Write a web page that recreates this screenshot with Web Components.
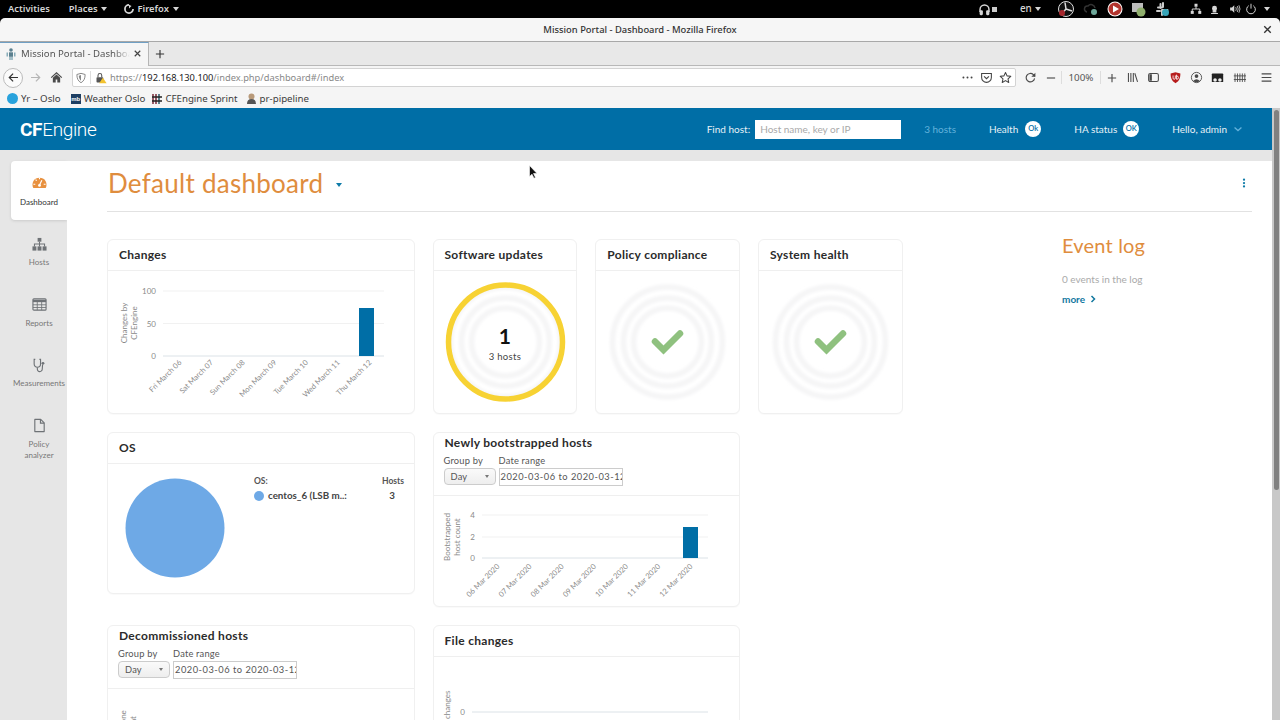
<!DOCTYPE html>
<html lang="en">
<head>
<meta charset="utf-8">
<title>Mission Portal - Dashboard - Mozilla Firefox</title>
<style>
  html, body { margin: 0; height: 720px; overflow: hidden; background: #fff; }
  body { display: flex; flex-direction: column; font-family: "Lato", "Liberation Sans", sans-serif; }
</style>
</head>
<body>
<gnome-bar></gnome-bar>
<ff-chrome></ff-chrome>
<app-header></app-header>
<app-shell>
  <side-nav></side-nav>
  <dash-page></dash-page>
</app-shell>
<page-scrollbar></page-scrollbar>
<mouse-cursor></mouse-cursor>

<script>
"use strict";

/* ---- icon set: 16x16 boxes, stroke or fill per icon ---- */
const ICONS = {
  back: '<path d="M13.5 8H3M7.5 3.2 2.8 8l4.7 4.8" fill="none" stroke="currentColor" stroke-width="1.5"/>',
  forward: '<path d="M2.5 8H13M8.5 3.2 13.2 8l-4.7 4.8" fill="none" stroke="currentColor" stroke-width="1.5"/>',
  home: '<path d="M1.5 8.2 8 2.2l6.500 6" fill="none" stroke="currentColor" stroke-width="1.5"/><path d="M3.500 8.200V14H7v-3.500h2V14h3.500V8.200L8 4.200z" fill="currentColor"/>',
  shield: '<path d="M8 1.800 13.500 3.300C13.500 8.500 12 12 8 14.300 4 12 2.500 8.500 2.500 3.300z" fill="none" stroke="currentColor" stroke-width="1.300"/><path d="M8 4v7.500C6 10 5.200 8 5 5z" fill="currentColor"/>',
  lock: '<rect x="2" y="7" width="9" height="7" rx="1" fill="#555"/><path d="M4 7V4.500a2.500 2.500 0 0 1 5 0V7" fill="none" stroke="#555" stroke-width="1.400"/><path d="M10.500 7.500 15.500 15h-10z" fill="#f2c230"/>',
  dots: '<circle cx="3" cy="8" r="1.200" fill="currentColor"/><circle cx="8" cy="8" r="1.200" fill="currentColor"/><circle cx="13" cy="8" r="1.200" fill="currentColor"/>',
  pocket: '<path d="M2 3h12v5a6 6 0 0 1-12 0z" fill="none" stroke="currentColor" stroke-width="1.300"/><path d="M5 6.500 8 9.500l3-3" fill="none" stroke="currentColor" stroke-width="1.300"/>',
  star: '<path d="M8 1.800 9.900 6l4.600.500-3.400 3.100.9 4.500L8 11.800l-4 2.300.9-4.500L1.500 6.500 6.100 6z" fill="none" stroke="currentColor" stroke-width="1.300" stroke-linejoin="round"/>',
  reload: '<path d="M13 9a5.200 5.200 0 1 1-1.500-4.500L13.500 6.500" fill="none" stroke="currentColor" stroke-width="1.400"/><path d="M14 2v5H9z" fill="currentColor"/>',
  minus: '<path d="M2.500 8h11" stroke="currentColor" stroke-width="1.500"/>',
  plus: '<path d="M2.500 8h11M8 2.500v11" stroke="currentColor" stroke-width="1.500"/>',
  library: '<path d="M3 2.500v11M6 2.500v11M9 2.500v11M10.800 2.800l3.400 10.600" fill="none" stroke="currentColor" stroke-width="1.300"/>',
  sidebar: '<rect x="2" y="3" width="12" height="10" rx="2" fill="none" stroke="currentColor" stroke-width="1.300"/><path d="M3 4h3v8H3z" fill="currentColor"/>',
  ublock: '<path d="M8 1.500 14 3.200C14 9 12.500 12.500 8 15 3.500 12.500 2 9 2 3.200z" fill="#b71c1c"/><path d="M5 5.500v3.200q0 1.500 1.400 1.500T7.800 8.700V5.500M9.200 4.500v5.700h.6q1.800 0 1.800-2t-1.800-2h-.6" fill="none" stroke="#fff" stroke-width="1"/>',
  account: '<circle cx="8" cy="8" r="6.300" fill="none" stroke="currentColor" stroke-width="1.100"/><circle cx="8" cy="6.300" r="2.300" fill="currentColor"/><path d="M3.800 12.200Q8 7.800 12.200 12.200 8 15.500 3.800 12.200z" fill="currentColor"/>',
  tabs: '<path d="M2 3h12q1 0 1 1v9.500H1V4q0-1 1-1z" fill="#222"/><circle cx="5" cy="11" r="2.200" fill="#eee"/><circle cx="11" cy="11" r="2.200" fill="#eee"/>',
  fence: '<path d="M2.500 3v10.500M5.500 3v10.500M8.500 3v10.500M11.500 3v10.500M14.500 3v10.500M1 6h15M1 10.500h15" fill="none" stroke="currentColor" stroke-width="1.100"/>',
  menu: '<path d="M2 3.500h12M2 8h12M2 12.500h12" stroke="currentColor" stroke-width="1.500"/>',
  close: '<path d="M4 4l8 8M12 4l-8 8" stroke="currentColor" stroke-width="1.700"/>',
  foot: '<path d="M8 1.500a6.500 6.500 0 1 0 6.500 6.500" fill="none" stroke="currentColor" stroke-width="2.800"/><path d="M8 1v6l4-4z" fill="currentColor"/>',
  headset: '<path d="M2.500 11V8a5.500 5.500 0 0 1 11 0v3" fill="none" stroke="currentColor" stroke-width="1.800"/><rect x="2" y="9" width="4" height="6" rx="1.400" fill="currentColor"/><rect x="10" y="9" width="4" height="6" rx="1.400" fill="currentColor"/>',
  network: '<rect x="6" y="1" width="4" height="4" fill="currentColor"/><rect x="1" y="10.500" width="4" height="4" fill="currentColor"/><rect x="11" y="10.500" width="4" height="4" fill="currentColor"/><path d="M8 5v3M3 10.500V8h10v2.500" fill="none" stroke="currentColor" stroke-width="1.300"/>',
  keeper: '<circle cx="8" cy="6" r="3.600" fill="currentColor"/><path d="M6 8h4v3.500H6zM3 13.800h10" stroke="currentColor" stroke-width="1.500" fill="currentColor"/>',
  speaker: '<path d="M1.500 6v4h2.500l3 3V3L4 6z" fill="currentColor"/><path d="M9 5.500q1.500 2.500 0 5M11 4q2.500 4 0 8M13.200 3q3 5 0 10" fill="none" stroke="currentColor" stroke-width="1.100"/>',
  power: '<path d="M5 3.600a5.800 5.800 0 1 0 6 0" fill="none" stroke="currentColor" stroke-width="1.300"/><path d="M8 1v6.500" stroke="currentColor" stroke-width="1.300"/>',
  gauge: '<path d="M1.400 12.800a7.500 7.500 0 1 1 13.200 0z" fill="currentColor"/><g stroke="#fff" stroke-width="1.200"><path d="M8 9.500 10.500 4.500"/><path d="M1.500 8.800h2M3.800 3.800l1.200 1.200M8 1.500v2M12.500 8.800h2"/></g><circle cx="8" cy="10" r="1.500" fill="#fff"/>',
  hosts: '<rect x="6" y="1" width="4" height="4" fill="currentColor"/><rect x=".5" y="10" width="4.200" height="4.500" fill="currentColor"/><rect x="5.900" y="10" width="4.200" height="4.500" fill="currentColor"/><rect x="11.300" y="10" width="4.200" height="4.500" fill="currentColor"/><path d="M8 5v5M2.600 10V7.500h10.800V10" fill="none" stroke="currentColor" stroke-width="1.100"/>',
  table: '<rect x="1" y="2" width="14" height="12" rx="1" fill="none" stroke="currentColor" stroke-width="1.200"/><path d="M1 3h14v2.500H1z" fill="currentColor"/><path d="M1 8.300h14M1 11.200h14M5.600 5v9M10.300 5v9" stroke="currentColor" stroke-width=".9"/>',
  stetho: '<path d="M3.500 1.500H2.300v5a3.400 3.400 0 0 0 6.800 0v-5H7.900" fill="none" stroke="currentColor" stroke-width="1.200"/><path d="M5.700 10v1.800a2.600 2.600 0 0 0 5.200.2l.4-5" fill="none" stroke="currentColor" stroke-width="1.200"/><circle cx="11.700" cy="5.700" r="1.500" fill="currentColor"/>',
  doc: '<path d="M3 1.500h6.300L13 5.200v9.300H3z" fill="none" stroke="currentColor" stroke-width="1.200" stroke-linejoin="round"/><path d="M9 1.500v4h4" fill="none" stroke="currentColor" stroke-width="1.200"/>',
  kebab: '<circle cx="8" cy="3.500" r="1.500" fill="currentColor"/><circle cx="8" cy="8" r="1.500" fill="currentColor"/><circle cx="8" cy="12.500" r="1.500" fill="currentColor"/>',
  chevron: '<path d="M2.500 5.500 8 10.500l5.500-5" fill="none" stroke="currentColor" stroke-width="2"/>'
};

class AppIcon extends HTMLElement {
  connectedCallback() {
    const root = this.attachShadow({ mode: "open" });
    const size = this.getAttribute("size") || 14;
    root.innerHTML = `<style>:host{display:inline-flex;align-items:center;justify-content:center}svg{display:block}</style>
      <svg width="${size}" height="${size}" viewBox="0 0 16 16">${ICONS[this.getAttribute("name")] || ""}</svg>`;
  }
}
customElements.define("app-icon", AppIcon);

/* ---- GNOME top bar ---- */
class GnomeBar extends HTMLElement {
  constructor() {
    super();
    this.attachShadow({ mode: "open" }).innerHTML = `
    <style>
      :host{display:flex;align-items:center;height:18px;background:#000;color:#d6d6d6;
        font:600 9.400px/18px "Noto Sans","Open Sans",sans-serif;flex:none;padding-left:8px}
      .caret{display:inline-block;border:3.500px solid transparent;border-top:4px solid #d6d6d6;border-bottom:0;margin-left:3px;vertical-align:1px}
      .m{white-space:nowrap}
      .right{margin-left:auto;display:flex;align-items:center;height:18px}
      .right > *{flex:none}
      .en{font-weight:500;margin:0 0 0 23px;width:27px;white-space:nowrap;font-size:9.800px}
      .square{width:5px;height:5px;background:#ccc;margin-left:1px}
    </style>
    <span class="m" style="margin-right:19px">Activities</span>
    <span class="m" style="margin-right:17px">Places<i class="caret"></i></span>
    <span class="m" style="display:flex;align-items:center;gap:4px"><app-icon name="foot" size="10"></app-icon>Firefox<i class="caret" style="margin-left:0"></i></span>
    <div class="right">
      <app-icon name="headset" size="13"></app-icon><i class="square"></i>
      <span class="en">en<i class="caret"></i></span>
      <svg width="18" height="18" viewBox="0 0 18 18" style="margin-left:10px"><circle cx="9" cy="9" r="7.500" fill="#111" stroke="#ddd" stroke-width="1"/><path d="M9 9 8 2.500M9 9l6 2M9 9l-4 4.500" stroke="#ddd" stroke-width="1.500"/><circle cx="5" cy="13" r="3" fill="#a5262c"/></svg>
      <svg width="16" height="14" viewBox="0 0 16 14" style="margin-left:8px"><path d="M4 10a3 3 0 0 1 1-6 4 4 0 0 1 7 2" fill="none" stroke="#333" stroke-width="1.500"/><circle cx="11" cy="10" r="3" fill="#6ea89a"/></svg>
      <svg width="16" height="16" viewBox="0 0 16 16" style="margin-left:8px"><circle cx="8" cy="8" r="7.500" fill="#fff"/><circle cx="8" cy="8" r="6.500" fill="#b3352f"/><path d="M6 4.500 12 8l-6 3.500z" fill="#fff"/></svg>
      <svg width="16" height="15" viewBox="0 0 16 15" style="margin-left:8px"><rect x="1" y="1" width="11" height="9" fill="#bbb"/><circle cx="10" cy="10" r="4.500" fill="#8fae6c"/></svg>
      <svg width="15" height="15" viewBox="0 0 15 15" style="margin-left:8px"><path d="M3 5.500h4M5.500 2v4M8 1v4M7.500 8h5M7 8v5" stroke="#ccc" stroke-width="2" stroke-linecap="round"/><path d="M2 9h3" stroke="#ccc" stroke-width="2" stroke-linecap="round"/><circle cx="10.500" cy="10.500" r="3.500" fill="#36a4b8"/></svg>
      <app-icon name="network" size="12" style="margin-left:20px"></app-icon>
      <app-icon name="keeper" size="11" style="margin-left:7px"></app-icon>
      <app-icon name="speaker" size="12" style="margin-left:9px"></app-icon>
      <app-icon name="power" size="12" style="margin-left:4px"></app-icon>
      <i class="caret" style="margin:0 10px 0 7px;vertical-align:0"></i>
    </div>`;
  }
}
customElements.define("gnome-bar", GnomeBar);

/* ---- Firefox chrome: title, tab strip, nav bar, bookmarks ---- */
class FfChrome extends HTMLElement {
  constructor() {
    super();
    this.attachShadow({ mode: "open" }).innerHTML = `
    <style>
      :host{display:block;flex:none;background:#000;color:#3c3c3c;font:9.600px "Noto Sans","Open Sans",sans-serif}
      .title{height:24px;background:#f6f6f6;border-radius:5px 5px 0 0;border-bottom:1px solid #a8a8a8;box-sizing:border-box;
        display:flex;align-items:center;justify-content:center;position:relative;font-weight:500;color:#333;font-size:9.400px}
      .title app-icon{position:absolute;right:6px;top:5px;color:#333}
      .tabs{height:24px;background:#e8e8e8;border-bottom:1px solid #b8b8b8;display:flex;box-sizing:border-box}
      .tab{width:149px;background:#f5f5f5;border-top:1px solid #6f9fc4;border-right:1px solid #b5b5b5;margin-bottom:-1px;box-sizing:border-box;
        display:flex;align-items:center;padding:0 0 2px 6px;gap:5px;white-space:nowrap;color:#555}
      .tab span{width:109px;overflow:hidden;-webkit-mask-image:linear-gradient(90deg,#000 85%,transparent)}
      .newtab{width:22px;display:flex;align-items:center;justify-content:center;color:#333}
      .nav{height:23px;background:#f5f5f5;display:flex;align-items:center;color:#4a4a4a;padding-left:3px}
      .nav > app-icon{width:21px;flex:none}
      .backbtn{width:20px;height:20px;border:1px solid #bbb;border-radius:50%;background:#fbfbfb;box-sizing:border-box;display:flex;align-items:center;justify-content:center;margin-right:2px;flex:none;color:#333}
      .url{flex:none;width:944px;height:19px;margin:0 4px 0 5px;background:#fff;border:1px solid #d3d3d3;border-radius:2px;box-sizing:border-box;display:flex;align-items:center;color:#888;white-space:nowrap;font-size:9.300px}
      .url b{font-weight:400;color:#222}
      .url .sep{width:1px;height:13px;background:#ddd;margin:0 4px 0 3px}
      .url .end{margin-left:auto;display:flex;align-items:center;gap:6px;color:#444;padding-right:3px}
      .zoom{width:38px;text-align:center;font-size:9.800px;flex:none;border-left:1px solid #ddd;border-right:1px solid #ddd;height:13px;line-height:13px;color:#555}
      .marks{height:19px;background:#f5f5f5;display:flex;align-items:center;padding-left:7px;color:#3c3c3c;white-space:nowrap;gap:8px;font-size:9.700px}
      .marks span{display:flex;align-items:center;gap:3px}
      .yr{width:11px;height:11px;border-radius:50%;background:#28a2dc}
      .mb{width:10px;height:10px;background:#1d3f63;color:#fff;font:700 6px/10px "Liberation Sans",sans-serif;text-align:center}
    </style>
    <div class="title">Mission Portal - Dashboard - Mozilla Firefox<app-icon name="close" size="13"></app-icon></div>
    <div class="tabs">
      <div class="tab">
        <svg width="10" height="12" viewBox="0 0 10 12" style="flex:none"><circle cx="5" cy="2" r="1.800" fill="#5a7f8e"/><rect x="3" y="4.300" width="4" height="4.500" fill="#5a7f8e"/><path d="M1.200 4.500v4M8.800 4.500v4M4 9v3M6 9v3" stroke="#6d9bab" stroke-width="1.200"/></svg>
        <span>Mission Portal - Dashboard</span><app-icon name="close" size="11" style="margin-left:-3px;color:#444"></app-icon>
      </div>
      <div class="newtab"><app-icon name="plus" size="12"></app-icon></div>
    </div>
    <div class="nav">
      <div class="backbtn"><app-icon name="back" size="13"></app-icon></div>
      <app-icon name="forward" size="13" style="color:#b5b5b5"></app-icon>
      <app-icon name="home" size="13"></app-icon>
      <div class="url">
        <app-icon name="shield" size="12" style="margin-left:2px"></app-icon><i class="sep"></i>
        <app-icon name="lock" size="12"></app-icon>
        <span style="margin-left:3px">https://<b>192.168.130.100</b>/index.php/dashboard#/index</span>
        <div class="end"><app-icon name="dots" size="13"></app-icon><app-icon name="pocket" size="13"></app-icon><app-icon name="star" size="13"></app-icon></div>
      </div>
      <app-icon name="reload" size="13"></app-icon>
      <app-icon name="minus" size="12" style="width:20px"></app-icon>
      <div class="zoom">100%</div>
      <app-icon name="plus" size="12"></app-icon>
      <app-icon name="library" size="13"></app-icon>
      <app-icon name="sidebar" size="13"></app-icon>
      <app-icon name="ublock" size="13" style="margin-left:1px"></app-icon>
      <app-icon name="account" size="13"></app-icon>
      <app-icon name="tabs" size="13"></app-icon>
      <app-icon name="fence" size="13" style="margin-left:1px"></app-icon>
      <app-icon name="menu" size="13" style="margin-left:6px"></app-icon>
    </div>
    <div class="marks">
      <span style="margin-right:2px"><i class="yr"></i>Yr – Oslo</span>
      <span style="margin-right:-1px"><i class="mb">mb</i>Weather Oslo</span>
      <span><svg width="10" height="10" viewBox="0 0 10 10"><path d="M1 0v10M4 0v10" stroke="#7a2a3a" stroke-width="1.500"/><path d="M7 0v10" stroke="#2a5a6a" stroke-width="1.500"/><path d="M0 3h10M0 7h10" stroke="#222" stroke-width="1.500"/></svg>CFEngine Sprint</span>
      <span><svg width="11" height="11" viewBox="0 0 11 11"><circle cx="5.500" cy="3.500" r="3" fill="#b89a7a"/><path d="M1 11q0-5 4.500-5T10 11z" fill="#555"/></svg>pr-pipeline</span>
    </div>`;
  }
}
customElements.define("ff-chrome", FfChrome);

/* ---- Mission Portal blue header ---- */
class AppHeader extends HTMLElement {
  constructor() {
    super();
    this.attachShadow({ mode: "open" }).innerHTML = `
    <style>
      :host{display:flex;align-items:center;flex:none;height:42px;background:#006ea6;color:#e6f1f7;font-size:10px;padding:0 29px 0 20px;box-sizing:border-box;width:1272px;white-space:nowrap}
      .logo{font:300 19px/1 "Roboto",sans-serif;color:#fff;letter-spacing:-.35px}
      .logo b{font-weight:700}
      .find{margin-left:auto;display:flex;align-items:center;gap:5px}
      input{width:146px;height:19px;box-sizing:border-box;border:0;background:#fff;padding:0 5px;font:10px "Lato",sans-serif;outline:none}
      input::placeholder{color:#a9a9a9;opacity:1}
      .hosts{margin-left:23px;color:#63b2dc}
      .stat{display:flex;align-items:center;gap:6px;margin-left:33px}
      .ok{width:16px;height:16px;border-radius:50%;background:#fff;color:#006ea6;font:600 7.500px/16px "Lato",sans-serif;text-align:center}
      .user{margin-left:33px;display:flex;align-items:center;gap:6px}
      .user app-icon{color:#63b2dc}
    </style>
    <div class="logo"><b>CF</b>Engine</div>
    <div class="find">Find host: <input placeholder="Host name, key or IP"></div>
    <span class="hosts">3 hosts</span>
    <div class="stat" style="gap:7px">Health <span class="ok">Ok</span></div>
    <div class="stat">HA status <span class="ok">OK</span></div>
    <div class="user">Hello, admin <app-icon name="chevron" size="10"></app-icon></div>`;
  }
}
customElements.define("app-header", AppHeader);

class AppShell extends HTMLElement {
  constructor() {
    super();
    this.attachShadow({ mode: "open" }).innerHTML = `
    <style>:host{display:flex;flex:1;min-height:0;background:#e6e6e6;width:1272px;overflow:hidden}</style><slot></slot>`;
  }
}
customElements.define("app-shell", AppShell);

/* ---- left navigation ---- */
class SideNav extends HTMLElement {
  constructor() {
    super();
    this.attachShadow({ mode: "open" }).innerHTML = `
    <style>
      :host{display:block;width:67px;flex:none;padding:11px 0 0 11px;box-sizing:border-box;font-size:8px;color:#777}
      .item{display:flex;flex-direction:column;align-items:center;width:56px;height:60.500px;padding-top:16px;box-sizing:border-box;line-height:11px;text-align:center;gap:5px}
      .item.on{background:#fff;color:#333;border-radius:4px 0 0 4px;height:59px;padding-top:14px;gap:6px;box-shadow:0 1px 3px rgba(0,0,0,.12)}
      .item.on app-icon{color:#e8913f}
      .item app-icon{color:#6e7276;height:16px}
      .item span{white-space:nowrap}
    </style>
    <div class="item on"><app-icon name="gauge" size="15"></app-icon><span>Dashboard</span></div>
    <div class="item"><app-icon name="hosts" size="15"></app-icon><span>Hosts</span></div>
    <div class="item"><app-icon name="table" size="15"></app-icon><span>Reports</span></div>
    <div class="item"><app-icon name="stetho" size="15"></app-icon><span>Measurements</span></div>
    <div class="item"><app-icon name="doc" size="15"></app-icon><span>Policy<br>analyzer</span></div>`;
  }
}
customElements.define("side-nav", SideNav);

/* ---- widget card ---- */
class WidgetCard extends HTMLElement {
  constructor() {
    super();
    this.attachShadow({ mode: "open" }).innerHTML = `
    <style>
      :host{display:block;background:#fff;border:1px solid #f0f0f0;border-radius:6px;box-sizing:border-box;overflow:hidden;align-self:start;box-shadow:0 1px 1px rgba(0,0,0,.025)}
      :host([wide]){grid-column:span 2}
      header{display:block;border-bottom:1px solid #efefef;padding:0 11px;height:31px;box-sizing:border-box;font:700 12px/30px "Lato",sans-serif;color:#2b2b2b;letter-spacing:.3px}
      :host([form]) header{height:auto;padding:0 10px 9px;line-height:20px}
      :host([form]) h4{padding-left:1px}
      h4{margin:0;font:inherit}
      ::slotted([slot="controls"]){margin-top:2px}
    </style>
    <header><h4 id="t"></h4><slot name="controls"></slot></header>
    <slot></slot>`;
  }
  connectedCallback() {
    this.shadowRoot.getElementById("t").textContent = this.getAttribute("heading");
  }
}
customElements.define("widget-card", WidgetCard);

/* group by / date range row */
class RangeControls extends HTMLElement {
  constructor() {
    super();
    this.attachShadow({ mode: "open" }).innerHTML = `
    <style>
      :host{display:flex;gap:3px;font:400 9.300px/12px "Lato",sans-serif;color:#555;letter-spacing:.2px}
      .sel{width:52px;height:17px;border:1px solid #ccc;border-radius:4px;box-sizing:border-box;background:linear-gradient(#fafafa,#eee);display:flex;align-items:center;justify-content:space-between;padding:0 6px 0 6px;margin-top:1px}
      .sel i{border:2.500px solid transparent;border-top:3px solid #777;border-bottom:0}
      .date{width:124px;height:18px;border:1px solid #ccc;box-sizing:border-box;margin-top:1px;padding-left:1px;line-height:16px;white-space:nowrap;overflow:hidden;letter-spacing:.5px}
    </style>
    <div>Group by<div class="sel">Day<i></i></div></div>
    <div>Date range<div class="date">2020-03-06 to 2020-03-12</div></div>`;
  }
}
customElements.define("range-controls", RangeControls);

/* bar chart, config is JSON in the "config" attribute, all values in px of the svg */
class BarChart extends HTMLElement {
  connectedCallback() {
    const c = JSON.parse(this.getAttribute("config"));
    const root = this.attachShadow({ mode: "open" });
    let s = "";
    c.ticks.forEach((t, i) => {
      const last = i === c.ticks.length - 1;
      s += `<line x1="${c.x0 - 2}" x2="${c.x1}" y1="${t[1]}" y2="${t[1]}" stroke="${last ? "#dbe2e7" : "#f1f1f1"}"/>`;
      s += `<text x="${c.x0 - 9}" y="${t[1] + 3}" text-anchor="end" font-size="8">${t[0]}</text>`;
    });
    if (c.bar) s += `<rect x="${c.bar[0]}" y="${c.bar[1]}" width="${c.bar[2]}" height="${c.bar[3]}" fill="#006ea6"/>`;
    (c.labels || []).forEach((l, i) => {
      const x = c.lx + c.lstep * i;
      s += `<text x="${x}" y="${c.ly}" text-anchor="end" transform="rotate(-45 ${x} ${c.ly})" font-size="7.500">${l}</text>`;
    });
    c.axis.forEach(a => {
      s += `<text x="0" y="0" text-anchor="middle" transform="translate(${a[1]} ${a[2]}) rotate(-90)" font-size="8">${a[0]}</text>`;
    });
    root.innerHTML = `<style>:host{display:block}svg{display:block}text{font-family:"Lato",sans-serif;fill:#8a8a8a}</style>
      <svg width="306" height="${c.h}" viewBox="0 0 306 ${c.h}">${s}</svg>`;
  }
}
customElements.define("bar-chart", BarChart);

/* ring gauge used by the three small cards */
class RingGauge extends HTMLElement {
  connectedCallback() {
    const warn = this.hasAttribute("warn");
    const root = this.attachShadow({ mode: "open" });
    const cx = 71.5, cy = 71;
    root.innerHTML = `
    <style>
      :host{display:block;position:relative;height:142px}
      svg{display:block}
      .mid{position:absolute;left:0;right:0;top:53px;text-align:center;color:#222;font:400 9.500px/1 "Lato",sans-serif;letter-spacing:.3px}
      .mid b{display:block;font:700 21px/24px "Lato",sans-serif;color:#111}
      .mid span{color:#444;display:block;margin-top:4px}
    </style>
    <svg width="143" height="142" viewBox="0 0 143 142">
      <defs><filter id="soft" x="-10%" y="-10%" width="120%" height="120%"><feGaussianBlur stdDeviation="1.500"/></filter></defs>
      <g fill="none" stroke="#f5f5f6" stroke-width="5.500" filter="url(#soft)">
        <circle cx="${cx}" cy="${cy}" r="55"/><circle cx="${cx}" cy="${cy}" r="44"/><circle cx="${cx}" cy="${cy}" r="34"/>
      </g>
      ${warn ? `<circle cx="${cx}" cy="${cy}" r="57" fill="none" stroke="#f7d233" stroke-width="5.500"/>`
             : '<path d="M59 70.500 67.500 79 84 62.500" fill="none" stroke="#8fc17f" stroke-width="6.500" stroke-linejoin="miter" stroke-linecap="round"/>'}
    </svg>
    ${warn ? '<div class="mid"><b>1</b><span>3 hosts</span></div>' : ""}`;
  }
}
customElements.define("ring-gauge", RingGauge);

class OsPie extends HTMLElement {
  constructor() {
    super();
    this.attachShadow({ mode: "open" }).innerHTML = `
    <style>
      :host{display:flex;height:130px;font:400 8.500px/11px "Lato",sans-serif;color:#444}
      svg{flex:none;margin:14px 0 0 17px}
      .leg{margin:12px 0 0 29px;width:150px}
      .row{display:flex;justify-content:space-between;font-weight:700;color:#555}
      .row2{display:flex;align-items:center;margin-top:3px;font-weight:700;font-size:9.800px;color:#444}
      .dot{width:10px;height:10px;border-radius:50%;background:#6ea9e6;margin-right:4px}
      .n{margin-left:auto;padding-right:9px}
    </style>
    <svg width="100" height="100"><circle cx="50" cy="50" r="49.500" fill="#6ea9e6"/></svg>
    <div class="leg">
      <div class="row"><span>OS:</span><span>Hosts</span></div>
      <div class="row2"><i class="dot"></i>centos_6 (LSB m..:<span class="n">3</span></div>
    </div>`;
  }
}
customElements.define("os-pie", OsPie);

/* ---- dashboard page ---- */
class DashPage extends HTMLElement {
  constructor() {
    super();
    const chart = o => JSON.stringify(o).replace(/"/g, "&quot;");
    const changes = chart({ h: 142, x0: 57, x1: 276, ticks: [[100, 20], [50, 52.5], [0, 85]], bar: [251, 37, 15, 48],
      labels: ["Fri March 06", "Sat March 07", "Sun March 08", "Mon March 09", "Tue March 10", "Wed March 11", "Thu March 12"],
      lx: 74, lstep: 31.67, ly: 92, axis: [["Changes by", 19, 52], ["CFEngine", 28.500, 52]] });
    const boot = chart({ h: 110, x0: 50, x1: 274, ticks: [[4, 19], [2, 41], [0, 62]], bar: [249, 31, 15, 31],
      labels: ["06 Mar 2020", "07 Mar 2020", "08 Mar 2020", "09 Mar 2020", "10 Mar 2020", "11 Mar 2020", "12 Mar 2020"],
      lx: 66, lstep: 32.17, ly: 71, axis: [["Bootstrapped", 16, 41], ["host count", 26, 41]] });
    const decom = chart({ h: 90, x0: 50, x1: 274, ticks: [], axis: [["Decommissione", 18, 49], ["d host count", 28, 49]] });
    const files = chart({ h: 70, x0: 40, x1: 274, ticks: [[0, 55]], axis: [["File changes", 16, 55]] });
    this.attachShadow({ mode: "open" }).innerHTML = `
    <style>
      :host{display:block;flex:1;min-width:0;height:600px;background:#fff;margin-top:11px;padding:0 20px 0 40px;box-sizing:border-box;overflow:hidden}
      .top{display:flex;align-items:center;height:44px;padding:0 0 6px 1px;border-bottom:1px solid #e2e2e2}
      h1{margin:0;font:400 26px/44px "Lato",sans-serif;color:#df8d3e;letter-spacing:.27px;white-space:nowrap}
      .caret{border:3px solid transparent;border-top:4px solid #0e7ba8;border-bottom:0;margin:3px 0 0 13px}
      .kebab{margin-left:auto;color:#0e7ba8;margin-right:2px}
      .body{display:flex;justify-content:space-between;padding-top:27px}
      .grid{display:grid;grid-template-columns:repeat(5,144.750px);column-gap:18px;row-gap:18px;width:796px}
      aside{width:190px;font:400 10px/1 "Lato",sans-serif;color:#aaa}
      h2{margin:-9px 0 0;font:400 20px/30px "Lato",sans-serif;color:#df8d3e;letter-spacing:.2px}
      aside p{margin:14px 0 0;white-space:nowrap}
      aside a{display:flex;align-items:center;gap:5px;margin-top:10px;font-weight:700;color:#12789f}
    </style>
    <div class="top"><h1>Default dashboard</h1><i class="caret"></i><app-icon class="kebab" name="kebab" size="12"></app-icon></div>
    <div class="body">
      <div class="grid">
        <widget-card heading="Changes" wide style="height:175px"><bar-chart config="${changes}"></bar-chart></widget-card>
        <widget-card heading="Software updates" style="height:175px"><ring-gauge warn></ring-gauge></widget-card>
        <widget-card heading="Policy compliance" style="height:175px"><ring-gauge></ring-gauge></widget-card>
        <widget-card heading="System health" style="height:175px"><ring-gauge></ring-gauge></widget-card>
        <widget-card heading="OS" wide style="height:162px"><os-pie></os-pie></widget-card>
        <widget-card heading="Newly bootstrapped hosts" form wide style="height:175px"><range-controls slot="controls"></range-controls><bar-chart config="${boot}"></bar-chart></widget-card>
        <span style="grid-column:span 1;display:none"></span>
        <widget-card heading="Decommissioned hosts" form wide style="height:200px"><range-controls slot="controls"></range-controls><bar-chart config="${decom}"></bar-chart></widget-card>
        <widget-card heading="File changes" wide style="height:200px"><bar-chart config="${files}"></bar-chart></widget-card>
      </div>
      <aside>
        <h2>Event log</h2>
        <p>0 events in the log</p>
        <a>more <svg width="6" height="8" viewBox="0 0 6 8"><path d="M1.500 1 4.500 4l-3 3" fill="none" stroke="#12789f" stroke-width="1.500"/></svg></a>
      </aside>
    </div>`;
  }
}
customElements.define("dash-page", DashPage);

/* things that lie over the page */
class PageScrollbar extends HTMLElement {
  constructor() {
    super();
    this.attachShadow({ mode: "open" }).innerHTML = `
    <style>
      :host{position:absolute;left:1272px;top:108px;width:8px;height:612px;background:#c8c8c8}
      div{position:absolute;left:1.500px;width:5px;top:2px;height:380px;background:#808080;border-radius:3px}
    </style><div></div>`;
  }
}
customElements.define("page-scrollbar", PageScrollbar);

class MouseCursor extends HTMLElement {
  constructor() {
    super();
    this.attachShadow({ mode: "open" }).innerHTML = `
    <style>:host{position:absolute;left:529px;top:165px;width:9px;height:14px}svg{display:block}</style>
    <svg width="9" height="14" viewBox="0 0 9 14"><path d="M.5.5v11l2.500-2.300 2 4 1.500-.7-2-4H8z" fill="#111" stroke="#fff" stroke-width=".6"/></svg>`;
  }
}
customElements.define("mouse-cursor", MouseCursor);
</script>
</body>
</html>
